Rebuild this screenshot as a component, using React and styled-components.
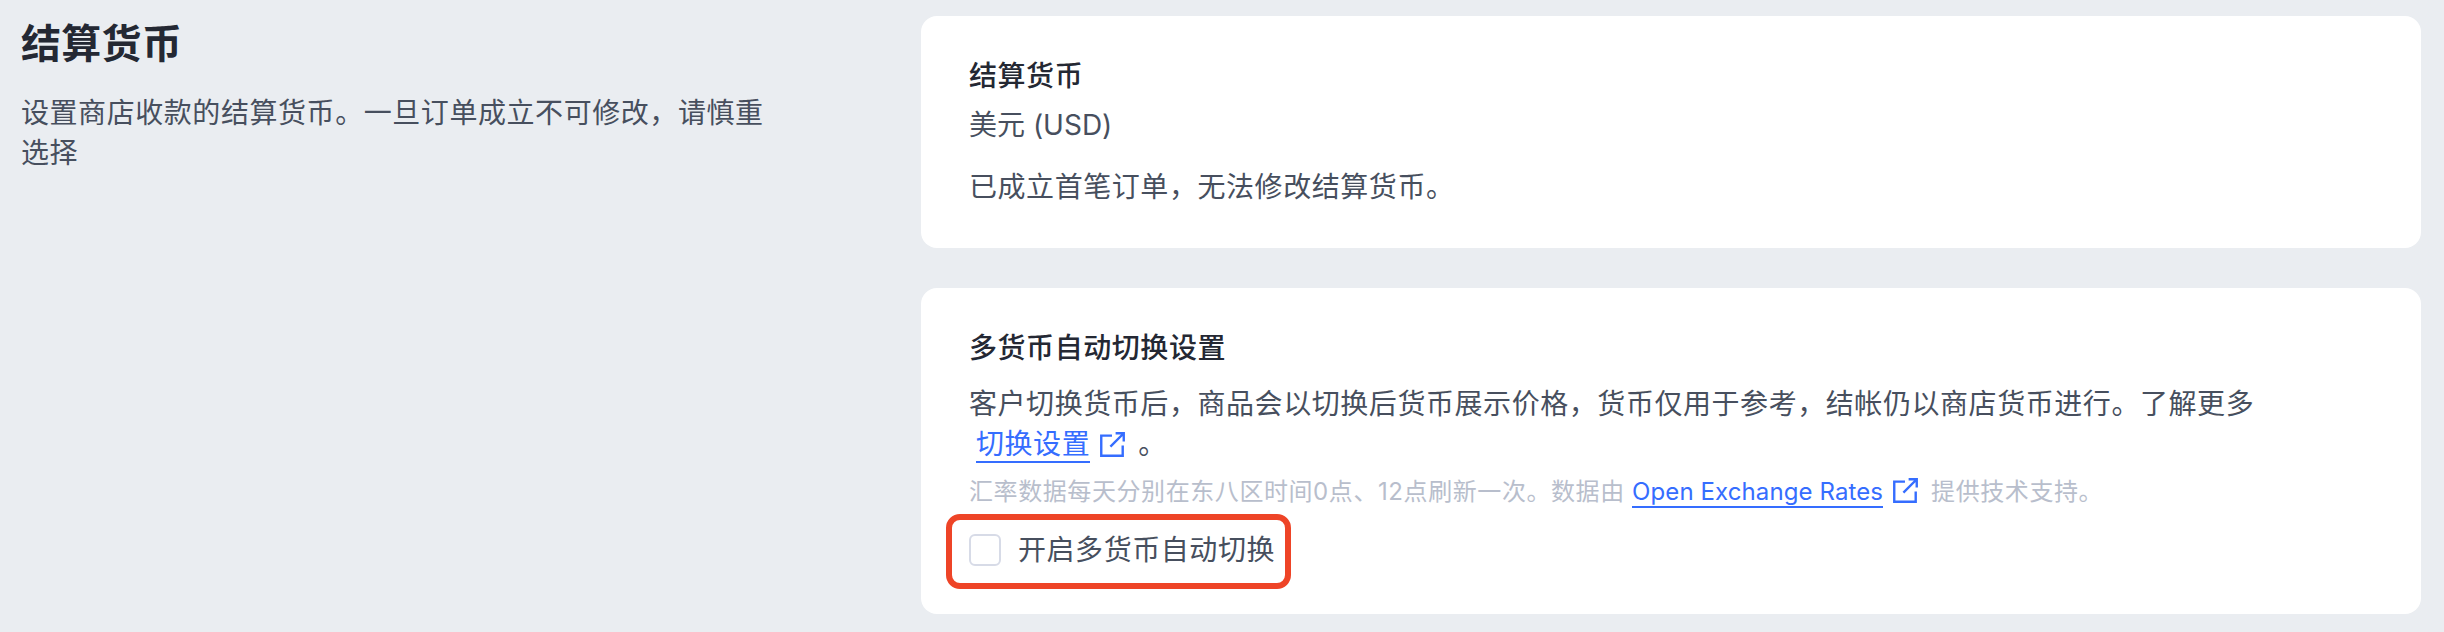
import React from 'react';
import styled, { createGlobalStyle } from 'styled-components';

const Global = createGlobalStyle`
  html, body { margin: 0; padding: 0; background: #eaedf1; }
  body { font-family: Inter, "Noto Sans CJK SC", sans-serif; }
`;

const Page = styled.div`
  display: grid;
  grid-template-columns: 921px 1500px;
  width: 2444px;
  height: 632px;
  overflow: hidden;
  background: #eaedf1;
  color: #474f5e;
  padding-top: 16px;
  box-sizing: border-box;
`;

const Side = styled.div`
  padding: 0 132px 0 21px;
`;

const Heading = styled.h2`
  margin: 0;
  font-size: 40px;
  line-height: 56px;
  font-weight: 600;
  color: #242833;
  letter-spacing: 0.3px;
`;

const SideText = styled.p`
  margin: 21px 0 0;
  font-size: 28px;
  line-height: 40px;
  letter-spacing: 0.56px;
`;

const Column = styled.div`
  display: flex;
  flex-direction: column;
  gap: 40px;
`;

const Card = styled.section`
  background: #fff;
  border-radius: 16px;
  padding: 40px 48px;
  height: ${p => p.$h};
  box-sizing: border-box;
`;

const Title = styled.div`
  font-size: 28px;
  line-height: 40px;
  font-weight: 500;
  color: #242833;
  letter-spacing: 0.56px;
`;

const Value = styled.div`
  font-size: 28px;
  line-height: 40px;
  margin-top: ${p => p.$mt || '0'};
  letter-spacing: ${p => p.$ls || '0'};
`;

const Body = styled.div`
  font-size: 28px;
  line-height: 40px;
  margin-top: 16px;
  letter-spacing: 0.56px;
`;

const Note = styled.div`
  font-size: 24px;
  line-height: 34px;
  color: #b8becc;
  margin-top: 11px;
  letter-spacing: 0.58px;
`;

const Link = styled.a`
  display: inline;
  color: #356dff;
  text-decoration: none;
  border-bottom: 2px solid #356dff;
  margin: ${p => p.$m || '0'};
  letter-spacing: ${p => p.$ls || '0.56px'};
`;

const Ext = styled.svg`
  width: 25px;
  height: 25px;
  margin: 0 13px 0 10px;
  vertical-align: -3px;
  color: #356dff;
`;

const CheckRow = styled.label`
  position: relative;
  display: flex;
  align-items: center;
  gap: 17px;
  margin-top: 21px;
  height: 40px;
  font-size: 28px;
  line-height: 40px;
  letter-spacing: 0.56px;
`;

const Box = styled.span`
  width: 32px;
  height: 32px;
  box-sizing: border-box;
  border: 2px solid #d7dbe7;
  border-radius: 6px;
  background: #fff;
`;

const Highlight = styled.span`
  position: absolute;
  left: -23px;
  top: -16px;
  width: 345px;
  height: 75px;
  box-sizing: border-box;
  border: 6px solid #ee4427;
  border-radius: 14px;
  pointer-events: none;
`;

const ExternalIcon = () => (
  <Ext viewBox="0 0 24 24" fill="none" stroke="currentColor" strokeWidth="2.3">
    <path d="M11.5 3.5H1.2v19.3h20.6V13" />
    <path d="M10 14 22.8 1.2M15 1.2h7.8V9" />
  </Ext>
);

export default function App() {
  return (
    <Page>
      <Global />
      <Side>
        <Heading>结算货币</Heading>
        <SideText>设置商店收款的结算货币。一旦订单成立不可修改，请慎重选择</SideText>
      </Side>
      <Column>
        <Card $h="232px">
          <Title>结算货币</Title>
          <Value $mt="9px">美元 (USD)</Value>
          <Value $mt="22px" $ls="0.56px">已成立首笔订单，无法修改结算货币。</Value>
        </Card>
        <Card $h="326px">
          <Title>多货币自动切换设置</Title>
          <Body>
            客户切换货币后，商品会以切换后货币展示价格，货币仅用于参考，结帐仍以商店货币进行。了解更多
            <br />
            <Link $m="0 0 0 7px">切换设置</Link>
            <ExternalIcon />
            。
          </Body>
          <Note>
            汇率数据每天分别在东八区时间0点、12点刷新一次。数据由 <Link $ls="0.1px">Open Exchange Rates</Link>
            <ExternalIcon />
            提供技术支持。
          </Note>
          <CheckRow>
            <Box />
            开启多货币自动切换
            <Highlight />
          </CheckRow>
        </Card>
      </Column>
    </Page>
  );
}
